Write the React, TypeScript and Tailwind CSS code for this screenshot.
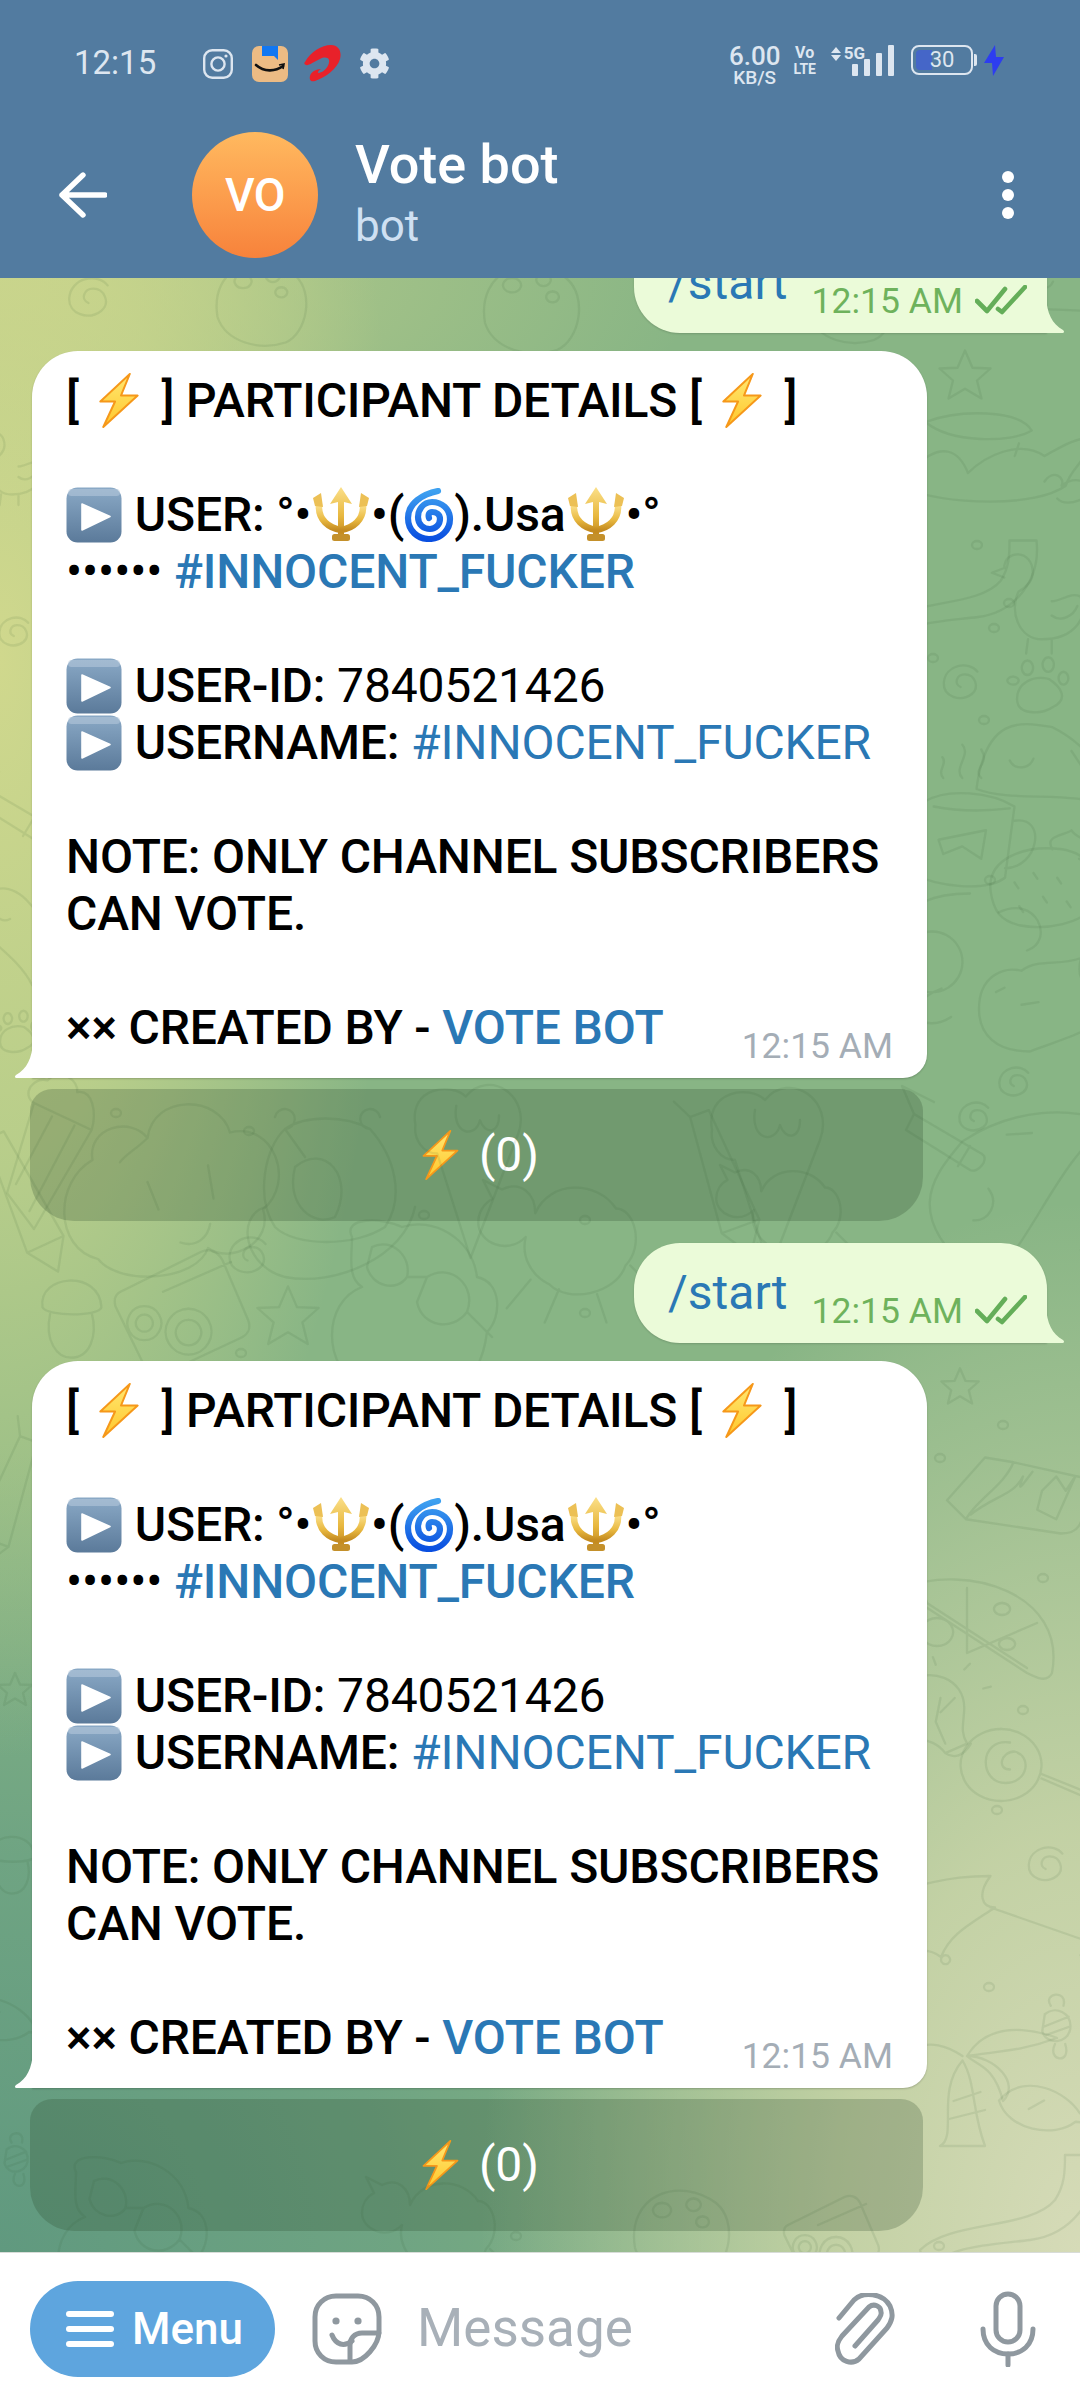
import React from "react";
import { FaCog } from "react-icons/fa";

const ROBOTO = "font-['Roboto',sans-serif]";

function Bolt({ w = 40, h = 55, wide }: { w?: number; h?: number; wide?: boolean }) {
  const id = React.useId();
  return (
    <svg width={w} height={h} viewBox="0 0 40 56" className={wide ? "shrink-0 ml-[8px] mr-[11px]" : "shrink-0"}>
      <defs>
        <linearGradient id={id} x1="0" y1="0" x2="0" y2="1">
          <stop offset="0" stopColor="#ffe873" />
          <stop offset="1" stopColor="#ffc72a" />
        </linearGradient>
      </defs>
      <path d="M31 1 L1 29 L16 29 L4 55 L39 23 L22 23 Z" fill={`url(#${id})`} stroke="#f6981a" strokeWidth="2" strokeLinejoin="round" />
    </svg>
  );
}

function Play() {
  const id = React.useId();
  return (
    <svg width="56" height="56" viewBox="0 0 56 56" className="shrink-0 mr-[1px]">
      <defs>
        <linearGradient id={id} x1="0" y1="0" x2="0" y2="1">
          <stop offset="0" stopColor="#8aa9c6" />
          <stop offset="1" stopColor="#5b7a9a" />
        </linearGradient>
      </defs>
      <rect x="0.5" y="0.5" width="55" height="55" rx="11" fill={`url(#${id})`} />
      <rect x="2" y="2" width="52" height="7" rx="3.5" fill="#b8cbdd" opacity=".55" />
      <path d="M16 17 L44 29.5 L16 43 Z" fill="#fff" stroke="#fff" strokeWidth="1.6" strokeLinejoin="round" />
    </svg>
  );
}

function Trident() {
  const id = React.useId();
  return (
    <svg width="60" height="56" viewBox="0 0 58 56" className="shrink-0">
      <defs>
        <linearGradient id={id} x1="0" y1="0" x2="0" y2="1">
          <stop offset="0" stopColor="#fbe08a" />
          <stop offset="0.6" stopColor="#e8b83f" />
          <stop offset="1" stopColor="#c48b20" />
        </linearGradient>
      </defs>
      <path d="M29 0 L40 17 L32 15 L32 48 L26 48 L26 15 L18 17 Z" fill={`url(#${id})`} />
      <path d="M7 18 C6 33 17 41 29 43 C41 41 52 33 51 18" fill="none" stroke={`url(#${id})`} strokeWidth="6.5" strokeLinecap="round" />
      <path d="M1 11 L9 6 L11 20 L3 19 Z M57 11 L49 6 L47 20 L55 19 Z" fill="#ecc055" />
      <rect x="20" y="47" width="18" height="7" rx="2.5" fill="#c4902a" />
    </svg>
  );
}

function Cyclone() {
  const id = React.useId();
  return (
    <svg width="50" height="54" viewBox="0 0 48 54" className="shrink-0">
      <defs>
        <linearGradient id={id} x1="0" y1="0" x2="0" y2="1">
          <stop offset="0" stopColor="#3ea1f0" />
          <stop offset="1" stopColor="#0a4fe0" />
        </linearGradient>
      </defs>
      <path d="M33 3 C18 6 3 15 3 30 C3 43 13 51 24 51 C36 51 45 42 45 31 C45 21 37 14 27 14 C18 14 13 22 13 29 C13 37 19 41 25 41 C31 41 35 36 35 31 C35 26 31 24 27 24 C24 24 23 27 24 30" fill="none" stroke={`url(#${id})`} strokeWidth="6.2" strokeLinecap="round" />
    </svg>
  );
}

function Checks() {
  return (
    <svg width="52" height="30" viewBox="0 0 52 30" fill="none" stroke="#64ae59" strokeWidth="4.6" strokeLinecap="round" strokeLinejoin="round" className="shrink-0">
      <path d="M2 16 L12 26 L30 4" />
      <path d="M23 24 L27 27 L50 2" />
    </svg>
  );
}

function TailLeft() {
  return (
    <svg width="18" height="36" viewBox="0 0 18 36" className="absolute left-[-17px] bottom-0">
      <path d="M18 0 C17 16 12 27 1 33 C-1 35 0 36 2 36 L18 36 Z" fill="#fff" />
    </svg>
  );
}

function TailRight() {
  return (
    <svg width="18" height="36" viewBox="0 0 18 36" className="absolute right-[-17px] bottom-0">
      <path d="M0 0 C1 16 6 27 17 33 C19 35 18 36 16 36 L0 36 Z" fill="#ebfbd9" />
    </svg>
  );
}

function Line({ children }: { children?: React.ReactNode }) {
  return <div className="h-[57px] flex items-center whitespace-pre">{children}</div>;
}

const M = ({ children }: { children: React.ReactNode }) => <span className="font-medium">{children}</span>;
const L = ({ children, m }: { children: React.ReactNode; m?: boolean }) => (
  <span className={m ? "font-medium text-[#2a78b5]" : "text-[#2a78b5]"}>{children}</span>
);

function BotMessage() {
  return (
    <div className="relative shrink-0 ml-[32px] w-[895px] h-[727px] mt-[18px] bg-white rounded-tl-[46px] rounded-tr-[46px] rounded-br-[24px] pl-[34px] pt-[21px] text-[48px] text-black tracking-[-0.15px] shadow-[0_1px_2px_rgba(0,0,0,0.2)]">
      <TailLeft />
      <Line>
        <M>[ </M><Bolt wide /><M> ] PARTICIPANT DETAILS [ </M><Bolt wide /><M> ]</M>
      </Line>
      <Line />
      <Line>
        <Play /><M> USER: °•</M><Trident /><M>•(</M><Cyclone /><M>).Usa</M><Trident /><M>•°</M>
      </Line>
      <Line>
        •••••• <L m>#INNOCENT_FUCKER</L>
      </Line>
      <Line />
      <Line>
        <Play /><M> USER-ID: </M>7840521426
      </Line>
      <Line>
        <Play /><M> USERNAME: </M><L>#INNOCENT_FUCKER</L>
      </Line>
      <Line />
      <Line><M>NOTE: ONLY CHANNEL SUBSCRIBERS</M></Line>
      <Line><M>CAN VOTE.</M></Line>
      <Line />
      <div className="h-[57px] flex items-center justify-between whitespace-pre pr-[34px]">
        <span><M>×× CREATED BY - </M><L m>VOTE BOT</L></span>
        <span className="text-[35.5px] tracking-normal text-[#a4adb6] mt-[39px]">12:15 AM</span>
      </div>
    </div>
  );
}

function KeyButton() {
  return (
    <div className="shrink-0 ml-[30px] mt-[11px] w-[893px] h-[132px] rounded-tl-[22px] rounded-tr-[22px] rounded-bl-[44px] rounded-br-[44px] bg-[rgba(40,70,40,0.24)] flex items-center justify-center gap-[20px] pl-[8px] text-[48px] text-white">
      <Bolt w={37} h={50} />
      <span>(0)</span>
    </div>
  );
}

function StartBubble({ mt }: { mt: string }) {
  return (
    <div className={`relative shrink-0 self-end mr-[33px] ${mt} w-[413px] h-[100px] bg-[#ebfbd9] rounded-tl-[46px] rounded-tr-[46px] rounded-bl-[46px] pl-[34px] flex items-center shadow-[0_1px_2px_rgba(0,0,0,0.15)]`}>
      <TailRight />
      <span className="text-[48px] text-[#2a78b5] leading-none">/start</span>
      <span className="ml-[24px] mt-[37px] text-[35.5px] leading-none text-[#6eb25c]">12:15 AM</span>
      <span className="ml-[12px] mt-[34px] flex"><Checks /></span>
    </div>
  );
}

type D = { d: string; x: number; y: number; s?: number; r?: number };

const STAR = "M0 -34 L10 -11 L34 -10 L16 6 L22 30 L0 17 L-22 30 L-16 6 L-34 -10 L-10 -11 Z";
const SWIRL = "M22 -12 C10 -28 -24 -22 -26 4 C-27 24 -2 32 14 20 C26 10 18 -8 4 -8 C-8 -8 -12 6 -2 10";
const CLOUD = "M-70 60 C-110 50 -110 -10 -75 -30 C-80 -60 -40 -70 -25 -50 C-20 -90 40 -90 50 -55 C90 -65 110 -10 80 15 C90 45 50 65 30 50 C20 80 -50 85 -70 60 Z M-25 -50 C-35 -40 -45 -35 -50 -28 M-25 -10 L-15 15 M30 -25 L35 5 M5 45 C20 50 30 40 32 28";
const CAMERA = "M-70 -25 L25 -72 C35 -76 45 -72 50 -62 L80 8 C84 18 80 26 70 30 L-20 72 C-30 76 -38 72 -42 62 L-76 -8 C-78 -16 -76 -22 -70 -25 Z M-42 -8 a20 20 0 1 0 .1 0 M-42 2 a10 10 0 1 0 .1 0 M10 -5 a27 27 0 1 0 .1 0 M10 8 a15 15 0 1 0 .1 0 M-20 -25 L60 -60";
const BIRD = "M-60 -70 C-70 -90 -30 -90 -10 -80 C20 -90 60 -70 65 -30 C90 -25 90 10 75 25 C72 50 60 80 40 80 L-50 80 C-90 60 -90 -5 -50 -20 C-65 -30 -60 -50 -60 -70 Z M-40 -60 C-20 -70 0 -50 -5 -30 C-15 -15 -40 -20 -45 -40 Z M15 -30 C40 -45 65 -20 55 5 C40 25 10 20 5 -5 Z M-5 -30 L15 -30 M55 5 L80 30";
const MUSHROOM = "M-30 -5 C-35 -40 30 -45 32 -5 C30 5 -25 5 -30 -5 Z M-22 2 C-28 30 -15 48 0 48 C20 48 28 25 22 2";
const POPCORN = "M-30 -60 L34 -30 L-30 80 L-60 40 Z M-30 -60 C-45 -70 -30 -90 -15 -85 C0 -100 20 -85 18 -72 C35 -75 40 -50 34 -30 M-10 -45 L-50 30 M15 -35 L-35 60";
const HIPPO = "M-60 -60 a10 10 0 1 1 10 12 L-30 -20 M45 -60 a10 10 0 1 0 -10 12 M-50 -48 C-30 -62 10 -62 35 -48 C60 -20 70 20 50 50 C20 70 -40 70 -60 50 C-80 20 -70 -30 -50 -48 Z M-40 -10 C-10 -35 20 0 0 40 C-20 50 -50 30 -40 -10 Z M-70 30 C-100 40 -90 90 -50 100 C0 110 70 80 80 30";
const ICE = "M-48 -40 C-55 -80 -10 -85 5 -70 C30 -100 75 -70 60 -30 L10 100 L-25 -10 C-40 -10 -50 -25 -48 -40 Z M-5 -60 C-10 -30 15 -25 20 -45 C25 -30 40 -30 40 -50";
const SHEEP = "M-70 -40 L-80 -60 L-60 -50 C-40 -60 -25 -45 -25 -25 C-10 -60 40 -60 60 -30 C80 -30 90 10 70 30 C60 60 10 70 -10 50 C-30 40 -40 20 -35 0 C-55 20 -85 5 -85 -15 C-85 -25 -80 -35 -70 -40 Z M-30 45 L-55 75 M0 55 L-15 90 M40 60 L50 90 M75 30 L100 55";
const MUG = "M-45 -35 C-20 -50 25 -45 50 -30 L40 45 C20 60 -30 55 -60 40 Z M50 -15 C85 -20 75 35 40 35 M-35 -30 C-10 -25 20 -25 45 -28 M-30 5 L20 -5 L15 25 L-5 12 L-25 20 Z M-5 -60 C-15 -70 5 -85 -5 -95 M15 -60 C5 -70 25 -75 15 -90 M-25 -60 C-32 -68 -20 -75 -26 -82";
const BERRY = "M-55 0 C-60 -35 -20 -50 20 -45 C50 -40 65 -15 55 10 C45 35 0 40 -25 35 C-45 30 -52 20 -55 0 Z M10 -45 C0 -60 25 -60 30 -65 C35 -55 55 -55 60 -40 C50 -35 45 -30 38 -35 M-30 -10 l4 6 M-10 -20 l4 6 M15 -15 l4 6 M-25 15 l4 6 M0 5 l4 6 M25 10 l4 6";
const PAW = "M-25 20 C-25 0 -5 -10 15 -5 C30 5 40 20 20 30 C5 40 -25 40 -25 20 Z M-30 -8 a7 5 0 1 0 .1 0 M-12 -28 a7 9 0 1 0 .1 0 M14 -32 a7 9 0 1 0 .1 0 M33 -14 a6 8 0 1 0 .1 0";
const CHICK = "M-45 -40 C-45 -60 -15 -60 -15 -35 C-15 -25 -25 -18 -30 -15 C-40 5 -30 35 -5 35 C30 35 45 10 35 -10 C25 -15 15 -5 5 -5 M-45 -40 L-58 -35 L-45 -30 M-20 35 L-22 50 M5 35 L5 50 M5 10 C15 18 28 10 32 0";
const LEAF = "M-70 20 C-60 -60 -20 -50 10 -45 C50 -25 70 10 75 40 C30 20 -30 35 -70 20 Z M-35 -10 C-30 0 -15 0 -10 -12 M30 -20 L40 -5";
const POT = "M-70 -60 C-30 -75 40 -75 55 -50 C30 -35 -40 -35 -70 -60 Z M-70 -60 L-80 -5 M40 -35 L35 -20 M-85 -5 C-50 -40 -30 -25 -20 0 C0 -20 40 -40 70 -20 C80 -25 110 -45 125 -40 C125 -20 100 -5 95 15 C60 40 -40 40 -105 15 Z M70 10 C80 -5 95 5 90 15 C110 0 130 15 125 25 C100 40 90 35 85 30";
const WORM = "M-90 40 C-60 10 20 20 45 -10 C55 -25 55 -40 55 -55 L85 -55 C90 -10 60 25 20 30 C-20 35 -60 35 -85 60 Z";
const CAT = "M-60 0 C-60 -40 -30 -50 -10 -45 C10 -60 35 -50 60 -60 C55 -40 60 -30 75 -25 C65 -15 70 0 80 15 C60 30 40 35 0 50 C-40 50 -60 30 -60 0 Z M-40 -20 l10 -5 M-10 -5 l20 -3";
const PLANET = "M-40 -30 a32 32 0 1 0 .1 0 M-60 -30 C-80 -60 -30 -70 0 -70 M-30 30 C-80 50 -50 80 -20 60 M30 -50 C70 -70 90 -20 60 -10";
const CHOC = "M-80 -5 L-40 -50 L-10 -45 C-20 -20 -50 -5 -60 15 Z M-10 -45 L80 -25 L60 20 C55 30 45 30 40 30 L-60 15 M-55 10 C-30 -10 -10 -10 0 -30 C-5 -15 -5 -15 10 -35 M20 -15 L35 -30 L45 -15 L55 -30 L35 15 L15 5 Z";
const PIZZA = "M-85 -35 C-20 -60 80 -30 65 50 C60 60 50 55 40 50 L-75 -25 Z M-75 -25 C-70 -30 -60 -25 -60 -20 L40 45 M-20 -35 L-20 30 M-20 30 L50 0 M-50 -5 a16 14 0 1 0 .1 0 M15 -20 a8 6 0 1 0 .1 0 M20 15 a8 6 0 1 0 .1 0";
const BULB = "M-50 -35 C-20 -55 15 -40 15 -10 C15 5 10 15 18 28 L-5 38 C-15 25 -25 25 -45 20 M-10 -20 L-15 5 L-5 28 M5 -20 L-10 -5 M-5 38 C5 45 15 40 22 28 M-15 -55 l-3 -8 M15 -50 l6 -6 M35 -30 l8 -2";
const LOLLY = "M-60 -40 a45 40 0 1 0 .1 0 M-50 -25 C-85 -30 -85 20 -55 20 C-30 20 -25 -10 -45 -15 C-60 -15 -65 5 -50 5 M-15 10 L60 40 M-15 15 L55 45";
const UMB = "M-80 -45 C-30 -60 0 -60 15 -60 C0 -40 5 -25 20 -25 C-10 -5 -30 5 -40 30 C-60 15 -80 25 -95 50 M15 -25 L130 15 C145 20 130 35 115 28 M-35 28 a5 5 0 1 0 .1 0";
const PALM = "M0 -10 C30 -60 100 -30 100 -30 C60 -15 30 -15 0 -10 Z M0 -10 C30 -10 60 20 40 40 C30 0 10 0 0 -10 Z M-5 -5 C-35 30 -10 80 -30 90 L20 90 C5 50 10 20 -5 -5 Z M-15 40 L15 30 M-20 60 L20 50 M-70 -15 C-40 -30 -20 -20 -5 -10";
const CANDY = "M-12 -15 C0 -25 20 -18 18 2 C15 20 -10 22 -15 5 Z M-5 -25 C-15 -40 15 -45 10 -25 M0 20 C-10 40 20 45 12 20 M-14 0 L16 -12 M-12 10 L16 0";
const FISH = "M-60 -10 C-30 -45 20 -20 35 5 C50 5 55 0 65 -5 C55 8 60 15 65 25 C50 20 40 15 30 15 C5 35 -50 25 -60 -10 Z M-25 0 l18 -10";
const PENCIL = "M-10 -60 L10 -60 L20 60 L-20 60 Z M-20 60 L0 90 L20 60 M-10 -60 L-20 -80";
const BRUSH = "M-45 -20 L40 30 C50 36 35 55 25 50 L-55 0 Z M25 20 L10 45 M-45 -20 L-60 -55 L-20 -35";
const SHELL = "M-50 20 C-60 -40 0 -60 40 -30 C65 -10 55 40 30 50 C0 60 -40 50 -50 20 Z M-20 -30 a10 8 0 1 0 .1 0 M15 -35 a8 7 0 1 0 .1 0 M25 -15 a7 6 0 1 0 .1 0";

const DOODLES: D[] = [
  { d: STAR, x: 965, y: 376, s: 0.75 },
  { d: POT, x: 985, y: 473, s: 0.85 },
  { d: WORM, x: 960, y: 590, s: 0.9 },
  { d: CHICK, x: 1047, y: 606, s: 0.95 },
  { d: SWIRL, x: 962, y: 680, s: 0.7 },
  { d: PAW, x: 1037, y: 683, s: 0.8 },
  { d: LEAF, x: 1043, y: 770, s: 0.95 },
  { d: MUG, x: 967, y: 835, s: 0.95 },
  { d: BERRY, x: 1043, y: 892, s: 0.95 },
  { d: PLANET, x: 970, y: 960, s: 0.95 },
  { d: CAT, x: 1030, y: 1009, s: 0.85 },
  { d: SWIRL, x: 1015, y: 1080, s: 0.6 },
  { d: POPCORN, x: 61, y: 1157, s: 0.9 },
  { d: CLOUD, x: 175, y: 1193, s: 1.1 },
  { d: HIPPO, x: 335, y: 1177, s: 1 },
  { d: ICE, x: 461, y: 1163, s: 0.95 },
  { d: SHEEP, x: 559, y: 1237, s: 0.95 },
  { d: SWIRL, x: 249, y: 1253, s: 0.75 },
  { d: CAMERA, x: 180, y: 1313, s: 0.85 },
  { d: STAR, x: 288, y: 1317, s: 0.9 },
  { d: BIRD, x: 412, y: 1307, s: 1 },
  { d: MUSHROOM, x: 71, y: 1312, s: 0.95 },
  { d: PENCIL, x: 20, y: 1190, s: 1, r: -25 },
  { d: ICE, x: 760, y: 1170, s: 1 },
  { d: SHEEP, x: 780, y: 1210, s: 0.75 },
  { d: PENCIL, x: 720, y: 1170, s: 1, r: -20 },
  { d: SWIRL, x: 975, y: 1115, s: 0.6 },
  { d: BRUSH, x: 950, y: 1130, s: 0.8 },
  { d: LEAF, x: 1010, y: 1185, s: 1.4, r: -60 },
  { d: STAR, x: 960, y: 1387, s: 0.55 },
  { d: CHOC, x: 1023, y: 1505, s: 0.95 },
  { d: PIZZA, x: 987, y: 1623, s: 1 },
  { d: BULB, x: 950, y: 1717, s: 0.95 },
  { d: LOLLY, x: 1055, y: 1765, s: 0.9 },
  { d: SWIRL, x: 1047, y: 1862, s: 0.7 },
  { d: UMB, x: 977, y: 1930, s: 0.9 },
  { d: CANDY, x: 1055, y: 2027, s: 0.85 },
  { d: PALM, x: 967, y: 2065, s: 0.9 },
  { d: FISH, x: 1050, y: 2109, s: 0.85 },
  { d: WORM, x: 1010, y: 2210, s: 1 },
  { d: SHELL, x: 260, y: 300, s: 0.85 },
  { d: SWIRL, x: 90, y: 295, s: 0.8 },
  { d: SHELL, x: 530, y: 305, s: 0.9 },
  { d: CHICK, x: 15, y: 470, s: 0.7 },
  { d: BRUSH, x: 15, y: 800, s: 0.8 },
  { d: SWIRL, x: 15, y: 630, s: 0.6 },
  { d: LEAF, x: 10, y: 930, s: 0.7, r: 40 },
  { d: PAW, x: 15, y: 1030, s: 0.6 },
  { d: STAR, x: 15, y: 1690, s: 0.5 },
  { d: PENCIL, x: 10, y: 1490, s: 0.9, r: 20 },
  { d: MUSHROOM, x: 12, y: 1860, s: 0.7 },
  { d: FISH, x: 5, y: 2020, s: 0.8 },
  { d: CANDY, x: 15, y: 2160, s: 0.7 },
  { d: BIRD, x: 130, y: 2235, s: 0.9 },
  { d: SHEEP, x: 430, y: 2225, s: 0.8 },
  { d: SHELL, x: 680, y: 2230, s: 0.9 },
  { d: CAMERA, x: 830, y: 2240, s: 0.6 },
  { d: SHELL, x: 850, y: 300, s: 0.8 },
  { d: LEAF, x: 1060, y: 290, s: 0.7 },
];

const DOTS: [number, number][] = [
  [977, 545], [1009, 603], [994, 628], [933, 658], [984, 720], [990, 880], [116, 1113], [249, 1131], [424, 1215], [585, 1220],
  [1086, 1250], [585, 1313], [241, 1353], [1003, 1425], [940, 1458], [1043, 1578], [1023, 1710], [997, 1810], [989, 1987], [939, 2246], [516, 2236],
];

function Background() {
  return (
    <svg className="absolute inset-0 w-full h-full" viewBox="0 278 1080 1974" preserveAspectRatio="none" fill="none" stroke="rgba(45,85,45,0.1)" strokeWidth="2.3" strokeLinecap="round" strokeLinejoin="round">
      {DOODLES.map((o, i) => (
        <path key={i} d={o.d} transform={`translate(${o.x} ${o.y}) rotate(${o.r ?? 0}) scale(${o.s ?? 1})`} vectorEffect="non-scaling-stroke" />
      ))}
      {DOTS.map(([x, y], i) => (
        <ellipse key={i} cx={x} cy={y} rx="5" ry="4" />
      ))}
    </svg>
  );
}

function Instagram() {
  return (
    <svg width="30" height="30" viewBox="0 0 30 30" fill="none" stroke="#dde6f0" strokeWidth="2.4">
      <rect x="1.2" y="1.2" width="27.6" height="27.6" rx="8" />
      <circle cx="15" cy="15" r="6.6" />
      <circle cx="23" cy="7" r="1.6" fill="#dde6f0" stroke="none" />
    </svg>
  );
}

function Amazon() {
  return (
    <svg width="36" height="36" viewBox="0 0 36 36">
      <rect width="36" height="36" rx="7" fill="#ecbb84" />
      <path d="M10 0 H26 V14 L22 10 H10 Z" fill="#1177f2" />
      <path d="M4 19 C12 26 23 26 31 20" fill="none" stroke="#111" strokeWidth="2.6" strokeLinecap="round" />
      <path d="M27 19 L32 18 L31 23" fill="none" stroke="#111" strokeWidth="1.6" />
    </svg>
  );
}

function Airtel() {
  return (
    <svg width="37" height="37" viewBox="0 0 37 37">
      <path d="M1 17 C6 7 18 0 27 0 C35 0 38 7 36 14 C33 24 22 32 11 36 C7 37 5 35 6 31 C7 27 12 24 17 24 C14 26 13 28 15 28 C21 27 26 20 25 15 C24 12 20 12 16 14 C10 17 4 21 2 20 C0 19 0 18 1 17 Z" fill="#e8212a" />
    </svg>
  );
}

function StatusRight() {
  return (
    <div className={`flex items-start mt-[3px] text-[#dde6f0] ${ROBOTO}`}>
      <div className="w-[52px] flex flex-col items-center font-medium">
        <span className="text-[26px] leading-[22px]">6.00</span>
        <span className="text-[19px] leading-[14px] mt-[4px] font-medium">KB/S</span>
      </div>
      <div className="ml-[13px] w-[22px] flex flex-col items-center font-bold">
        <span className="text-[16px] leading-[16px]">Vo</span>
        <span className="text-[14px] leading-[14px] mt-[1px]">LTE</span>
      </div>
      <div className="ml-[15px] flex flex-col">
        <div className="flex items-center h-[17px]">
          <svg width="10" height="16" viewBox="0 0 10 16" fill="#dde6f0">
            <path d="M5 1 L10 7 H0 Z M5 15 L10 9 H0 Z" />
          </svg>
          <span className="ml-[3px] text-[17px] leading-none font-bold">5G</span>
        </div>
      </div>
      <svg width="42" height="31" viewBox="0 0 42 31" fill="#dde6f0" className="ml-[-13px]">
        <rect x="0" y="19" width="6" height="12" rx="1" />
        <rect x="12" y="14" width="6" height="17" rx="1" />
        <rect x="24" y="8" width="6" height="23" rx="1" />
        <rect x="36" y="0" width="6" height="31" rx="1" />
      </svg>
      <div className="relative ml-[17px] w-[62px] h-[30px] rounded-[8px] border-[2px] border-[#dde6f0] overflow-hidden flex items-center justify-center">
        <div className="absolute left-[3px] top-[3px] bottom-[3px] w-[16px] rounded-l-[4px] bg-[#4566c8]"></div>
        <span className="relative text-[22px] leading-none text-[#dde6f0]">30</span>
      </div>
      <div className="ml-[1px] mt-[9px] w-[3px] h-[12px] bg-[#dde6f0] rounded-r-[2px]"></div>
      <svg width="20" height="31" viewBox="0 0 20 31" className="ml-[7px]">
        <path d="M11 0 L0 18 L8 18 L9 31 L20 12 L12 12 Z" fill="#2d3df0" />
      </svg>
    </div>
  );
}

function Sticker() {
  return (
    <svg width="70" height="72" viewBox="0 0 70 72" fill="none" stroke="#8f989f" strokeWidth="5" strokeLinecap="round" strokeLinejoin="round">
      <path d="M24 3 H46 C58 3 67 12 67 24 V38 C67 52 52 69 40 69 H24 C12 69 3 60 3 48 V24 C3 12 12 3 24 3 Z" />
      <path d="M67 40 H50 C42 40 38 46 38 52 V67" />
      <path d="M20 42 C24 52 32 54 40 48" />
      <circle cx="24" cy="28" r="3.6" fill="#8f989f" stroke="none" />
      <circle cx="46" cy="28" r="3.6" fill="#8f989f" stroke="none" />
    </svg>
  );
}

function Clip() {
  return (
    <svg width="60" height="72" viewBox="0 0 60 72" fill="none" stroke="#8f989f" strokeWidth="5" strokeLinecap="round" strokeLinejoin="round">
      <path d="M4 25 L19 7 C28 -2 48 0 55 13 C59 22 57 28 52 35 L24 66 C17 72 5 69 3 58 C1 52 3 48 7 43 L34 14 C39 10 46 13 46 19 C47 22 45 24 43 27 L20 53" />
    </svg>
  );
}

function Mic() {
  return (
    <svg width="56" height="76" viewBox="0 0 56 76" fill="none" stroke="#8f989f" strokeWidth="5" strokeLinecap="round">
      <rect x="16" y="3" width="24" height="48" rx="12" />
      <path d="M3 38 C3 54 14 63 28 63 C42 63 53 54 53 38" />
      <path d="M28 63 V74" />
    </svg>
  );
}

export default function App() {
  return (
    <div className={`w-[1080px] h-[2400px] flex flex-col overflow-hidden bg-white ${ROBOTO}`}>
      <header className="shrink-0 h-[278px] bg-[#527ba0]">
        <div className="h-[82px] pt-[45px] pl-[74px] pr-[76px] flex items-center justify-between">
          <div className="flex items-center">
            <span className="w-[129px] text-[33px] leading-none text-[#dde6f0] mt-[-2px]">12:15</span>
            <Instagram />
            <span className="ml-[19px] flex"><Amazon /></span>
            <span className="ml-[16px] flex"><Airtel /></span>
            <span className="ml-[18px] flex"><FaCog size={31} color="#dde6f0" /></span>
          </div>
          <StatusRight />
        </div>
        <div className="mt-[50px] h-[126px] flex items-center pl-[59px] pr-[66px]">
          <svg width="48" height="46" viewBox="0 0 48 46" fill="none" stroke="#fff" strokeWidth="5.4" strokeLinecap="round" strokeLinejoin="round">
            <path d="M46 23 H3 M24 3 L3 23 L24 43" />
          </svg>
          <div className="ml-[85px] w-[126px] h-[126px] rounded-full bg-gradient-to-b from-[#ffb95f] to-[#f7823b] flex items-center justify-center text-[46px] font-medium text-white tracking-[-0.5px]">
            VO
          </div>
          <div className="ml-[37px] pt-[2px] flex flex-col flex-1">
            <span className="text-[54px] leading-[60px] font-medium text-white">Vote bot</span>
            <span className="text-[44px] leading-[62px] text-[#cfe0f2]">bot</span>
          </div>
          <div className="flex flex-col gap-[6px]">
            <span className="w-[12px] h-[12px] rounded-full bg-white"></span>
            <span className="w-[12px] h-[12px] rounded-full bg-white"></span>
            <span className="w-[12px] h-[12px] rounded-full bg-white"></span>
          </div>
        </div>
      </header>

      <main className="relative flex-1 min-h-0 overflow-hidden flex flex-col justify-end pb-[21px] bg-[#88b585] bg-[radial-gradient(ellipse_700px_260px_at_0px_0px,rgba(205,214,140,0.75)_0%,rgba(136,181,133,0)_100%),radial-gradient(ellipse_400px_1100px_at_0px_380px,#d0d88d_0%,rgba(200,214,140,0.75)_45%,rgba(136,181,133,0)_100%),radial-gradient(ellipse_600px_1050px_at_100%_100%,#d6dbb8_0%,rgba(205,214,170,0.85)_40%,rgba(136,181,133,0)_100%),radial-gradient(ellipse_800px_800px_at_0px_100%,#60997f_0%,rgba(105,160,130,0.8)_50%,rgba(136,181,133,0)_100%)]">
        <Background />
        <StartBubble mt="mt-0" />
        <BotMessage />
        <KeyButton />
        <StartBubble mt="mt-[22px]" />
        <BotMessage />
        <KeyButton />
      </main>

      <footer className="shrink-0 h-[148px] bg-white flex items-center pl-[30px] pt-[4px] border-t border-[#d8dcd8]">
        <div className="w-[245px] h-[96px] rounded-[48px] bg-[#5ea5de] flex items-center pl-[36px] text-white">
          <div className="flex flex-col gap-[9px]">
            <span className="w-[48px] h-[6px] rounded-full bg-white"></span>
            <span className="w-[48px] h-[6px] rounded-full bg-white"></span>
            <span className="w-[48px] h-[6px] rounded-full bg-white"></span>
          </div>
          <span className="ml-[18px] text-[44px] font-medium leading-none">Menu</span>
        </div>
        <span className="ml-[37px] flex"><Sticker /></span>
        <span className="ml-[35px] flex-1 text-[53px] leading-none text-[#a8b0b8]">Message</span>
        <span className="flex"><Clip /></span>
        <span className="ml-[85px] mr-[44px] flex"><Mic /></span>
      </footer>
    </div>
  );
}
